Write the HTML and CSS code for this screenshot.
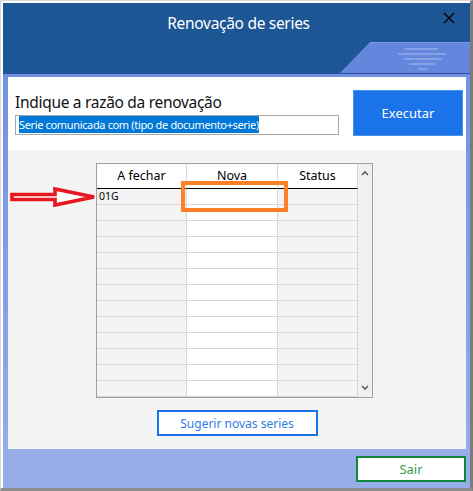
FILE: index.html
```html
<!DOCTYPE html>
<html>
<head>
<title>Renovação de series</title>
<link rel="stylesheet" href="styles.css">
</head>
<body>
<div class="window">
<div class="frame">
  <!-- title bar -->
  <div class="titlebar">
    <span class="title">Renovação de series</span>
    <svg class="close" width="12" height="12" viewBox="0 0 12 12">
      <path d="M1 1 L11 11 M11 1 L1 11" stroke="#000" stroke-width="1.3" fill="none"/>
    </svg>
    <svg class="deco" width="133" height="33" viewBox="0 0 133 33">
      <polygon points="3,33 33,2 133,2 133,33" fill="#6586dd"/>
      <line x1="33" y1="2.5" x2="133" y2="2.5" stroke="#7a98e6" stroke-width="1"/>
      <g stroke="#a9bdf0" stroke-width="1.6" stroke-linecap="round" opacity="0.7">
        <line x1="68" y1="9" x2="100" y2="9"/>
        <line x1="62" y1="14" x2="108" y2="14"/>
        <line x1="68" y1="19" x2="104" y2="19"/>
        <line x1="73" y1="24" x2="97" y2="24"/>
        <line x1="82" y1="29" x2="90" y2="29"/>
      </g>
    </svg>
  </div>

  <div class="content">
    <!-- reason row -->
    <div class="reason">
      <div class="reason-left">
        <div class="reason-label">Indique a razão da renovação</div>
        <div class="reason-input"><span class="selected">Serie comunicada com (tipo de documento+serie)</span></div>
      </div>
      <button class="btn-run">Executar</button>
    </div>

    <!-- series grid -->
    <div class="series">
      <svg class="arrow" width="88" height="22" viewBox="0 0 88 22">
        <polygon points="2,8.5 45,8.5 45,3 84,11 45,19 45,13.5 2,13.5" fill="#fff" stroke="#e8161f" stroke-width="3.6" stroke-linejoin="miter"/>
      </svg>
      <div class="grid-box">
        <div class="grid" id="grid">
          <div class="head">A fechar</div>
          <div class="head">Nova</div>
          <div class="head">Status</div>
        </div>
        <div class="scrollbar">
          <svg width="8" height="6" viewBox="0 0 8 6"><path d="M1 5 L4 2 L7 5" stroke="#606060" stroke-width="1.6" fill="none"/></svg>
          <svg width="8" height="6" viewBox="0 0 8 6"><path d="M1 1 L4 4 L7 1" stroke="#606060" stroke-width="1.6" fill="none"/></svg>
        </div>
        <div class="highlight"></div>
      </div>
      <button class="btn-suggest">Sugerir novas series</button>
    </div>
  </div>

  <div class="footer">
    <button class="btn-exit">Sair</button>
  </div>
</div>
</div>

<script>
//fill the grid rows
var grid = document.getElementById("grid");
var rows = [["01G", "", ""]];
for (var i = 1; i < 13; i++) {
  rows.push(["", "", ""]);
}
for (var r = 0; r < rows.length; r++) {
  for (var c = 0; c < 3; c++) {
    var cell = document.createElement("div");
    cell.className = "cell col" + c;
    cell.innerHTML = rows[r][c];
    grid.appendChild(cell);
  }
}
</script>
</body>
</html>
```

FILE: styles.css
```css
body {
margin: 0;
background: #fff;
font-family: "Noto Sans", "Open Sans", sans-serif;
}
.window {
width: 473px;
height: 491px;
box-sizing: border-box;
border-left: 1px solid #d8d8d8;
border-top: 1px solid #d8d8d8;
border-right: 3px solid #7c7c7c;
border-bottom: 3px solid #8c8c8c;
padding: 2px 0px 0px 2px;
background: #fff;
}
.frame {
width: 467px;
height: 485px;
display: flex;
flex-direction: column;
background: linear-gradient(#6c8ce0, #97aee9);
}
.titlebar {
position: relative;
height: 70px;
flex-shrink: 0;
background: #1d5694;
border-bottom: 1px solid #2c4f9d;
text-align: center;
}
.title {
display: block;
padding-top: 9px;
padding-left: 4px;
line-height: 22px;
font-size: 15.5px;
color: #fff;
letter-spacing: -0.3px;
}
.close {
position: absolute;
top: 9px;
right: 15px;
}
.deco {
position: absolute;
right: 0px;
bottom: 0px;
}
.content {
margin: 3px 4px 0px 5px;
display: flex;
flex-direction: column;
}
.reason {
height: 73px;
box-sizing: border-box;
background: #fff;
display: flex;
gap: 14px;
padding: 13px 3px 0px 7px;
}
.reason-left {
width: 324px;
display: flex;
flex-direction: column;
}
.reason-label {
font-size: 15.5px;
line-height: 22px;
color: #111;
letter-spacing: -0.3px;
margin-top: 1px;
}
.reason-input {
margin-top: 2px;
height: 20px;
box-sizing: border-box;
border: 1px solid #a8a8a8;
padding: 1px 3px 0px 3px;
line-height: 16px;
font-size: 11px;
white-space: nowrap;
overflow: hidden;
letter-spacing: -0.35px;
}
.selected {
background: #0078d7;
color: #fff;
padding: 1px 0px;
}
.btn-run {
width: 110px;
height: 46px;
background: #1a73e8;
border: 1px solid #4a93f0;
color: #fff;
font-family: "Noto Sans", sans-serif;
font-size: 13px;
}
.series {
position: relative;
height: 299px;
box-sizing: border-box;
background: #f4f4f4;
padding-top: 13px;
display: flex;
flex-direction: column;
align-items: center;
}
.arrow {
position: absolute;
left: 2px;
top: 36px;
}
.grid-box {
position: relative;
display: flex;
width: 277px;
height: 235px;
box-sizing: border-box;
border: 1px solid #a0a0a0;
margin-right: 5px;
background: #fff;
}
.grid {
display: grid;
grid-template-columns: 90px 91px 80px;
grid-auto-rows: 16px;
grid-template-rows: 25px;
align-content: start;
}
.head {
background: #fff;
border-right: 1px solid #d8d8d8;
border-bottom: 1px solid #000;
font-size: 12.5px;
line-height: 24px;
text-align: center;
color: #000;
}
.cell {
box-sizing: border-box;
border-right: 1px solid #d6d6d6;
border-bottom: 1px solid #d6d6d6;
font-size: 10.5px;
line-height: 15px;
padding-left: 2px;
color: #000;
}
.col0 {
background: #f4f4f4;
}
.col1 {
background: #fff;
}
.col2 {
background: #f4f4f4;
}
.scrollbar {
width: 14px;
background: #f0f0f0;
display: flex;
flex-direction: column;
justify-content: space-between;
align-items: center;
padding: 6px 0px 6px 0px;
box-sizing: border-box;
}
.highlight {
position: absolute;
left: 84px;
top: 17px;
width: 107px;
height: 31px;
box-sizing: border-box;
border: 4px solid #ff7f27;
}
.btn-suggest {
margin-top: 12px;
width: 161px;
height: 26px;
background: #fff;
border: 2px solid #1a73e8;
color: #2f7de4;
font-family: "Noto Sans", sans-serif;
font-size: 12px;
}
.footer {
flex: 1;
display: flex;
justify-content: flex-end;
padding: 7px 4px 0px 0px;
background: #96ade8;
margin-top: 0px;
}
.btn-exit {
width: 110px;
height: 26px;
background: #fff;
border: 2px solid #11863b;
color: #3b9a4f;
font-family: "Noto Sans", sans-serif;
font-size: 13px;
}
```
